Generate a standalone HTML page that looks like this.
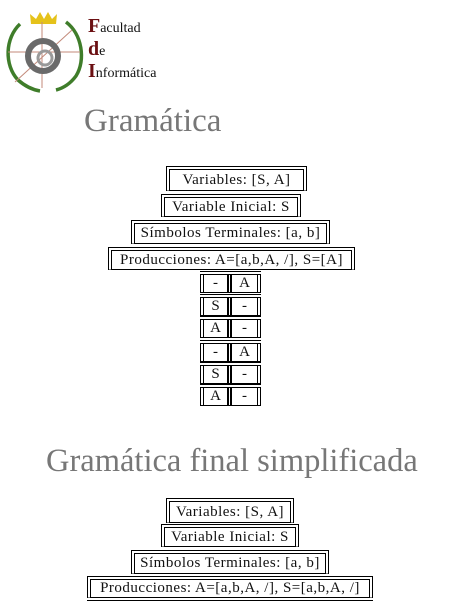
<!DOCTYPE html>
<html><head><meta charset="utf-8"><style>
body{margin:0;width:473px;height:615px;background:#fff;position:relative;overflow:hidden;font-family:"Liberation Serif",serif;color:#111}
.b{position:absolute;box-sizing:border-box;border-top:4px double #000;border-left:4px double #000;border-right:4px double #000;border-bottom:1px solid #000;font-size:15px;letter-spacing:0.5px;text-align:center;display:flex;align-items:center;justify-content:center;white-space:nowrap}
.c{position:absolute;box-sizing:border-box;width:61px;border-top:4px double #000;border-bottom:1px solid #000;font-size:15px}
.c div{position:absolute;top:0;bottom:0;box-sizing:border-box;border-left:4px double #000;border-right:4px double #000;display:flex;align-items:center;justify-content:center}
.t{position:absolute;color:#777;font-size:33px;white-space:nowrap}
.lg{position:absolute;font-size:14px;color:#111}
.lg b{color:#6b0f12;font-size:20px;font-weight:bold}
</style></head><body>
<svg style="position:absolute;left:0;top:0" width="90" height="95" viewBox="0 0 90 95">
<path d="M20 24 C5 38 4 65 18 80 C26 87 34 90 40 91" stroke="#3f7d2a" stroke-width="3.5" fill="none"/>
<path d="M66 22 C82 34 86 60 76 76 C70 84 64 88 56 90" stroke="#3f7d2a" stroke-width="3.5" fill="none"/>
<path d="M31 24 L30 14 L36 19 L40 12 L44 19 L48 12 L52 19 L57 14 L56 24 Z" fill="#e5c21a"/>
<g stroke="#c38a7a" stroke-width="1"><line x1="8" y1="52" x2="80" y2="52"/><line x1="42" y1="22" x2="42" y2="88"/><line x1="15" y1="82" x2="72" y2="30"/></g>
<circle cx="43" cy="56" r="15" fill="none" stroke="#6a6a6a" stroke-width="6"/>
<circle cx="45" cy="58" r="7" fill="none" stroke="#999" stroke-width="3"/>
</svg>
<div class="lg" style="left:88px;top:15px"><b>F</b>acultad</div>
<div class="lg" style="left:88px;top:38px"><b>d</b>e</div>
<div class="lg" style="left:88px;top:60px"><b>I</b>nformática</div>
<div class="t" style="left:84px;top:103px">Gramática</div>

<div class="b" style="left:166px;top:166px;width:141px;height:25px">Variables: [S, A]</div>
<div class="b" style="left:161px;top:194px;width:140px;height:23px">Variable Inicial: S</div>
<div class="b" style="left:131px;top:220px;width:199px;height:24px">Símbolos Terminales: [a, b]</div>
<div class="b" style="left:108px;top:247px;width:247px;height:23px">Producciones: A=[a,b,A, /], S=[A]</div>

<div class="c" style="left:200px;top:271px;height:22px"><div style="left:0;width:31px">-</div><div style="left:28px;width:33px">A</div></div>
<div class="c" style="left:200px;top:294px;height:22px"><div style="left:0;width:31px">S</div><div style="left:28px;width:33px">-</div></div>
<div class="c" style="left:200px;top:316px;height:22px"><div style="left:0;width:31px">A</div><div style="left:28px;width:33px">-</div></div>
<div class="c" style="left:200px;top:340px;height:22px"><div style="left:0;width:31px">-</div><div style="left:28px;width:33px">A</div></div>
<div class="c" style="left:200px;top:362px;height:22px"><div style="left:0;width:31px">S</div><div style="left:28px;width:33px">-</div></div>
<div class="c" style="left:200px;top:384px;height:22px"><div style="left:0;width:31px">A</div><div style="left:28px;width:33px">-</div></div>

<div class="t" style="left:46px;top:443px;font-size:32.5px">Gramática final simplificada</div>

<div class="b" style="left:166px;top:498px;width:128px;height:25px">Variables: [S, A]</div>
<div class="b" style="left:161px;top:524px;width:138px;height:23px">Variable Inicial: S</div>
<div class="b" style="left:131px;top:550px;width:198px;height:24px">Símbolos Terminales: [a, b]</div>
<div class="b" style="left:87px;top:576px;width:286px;height:22px">Producciones: A=[a,b,A, /], S=[a,b,A, /]</div>
<div style="position:absolute;left:87px;top:600px;width:286px;border-top:1px solid #000"></div>
</body></html>
